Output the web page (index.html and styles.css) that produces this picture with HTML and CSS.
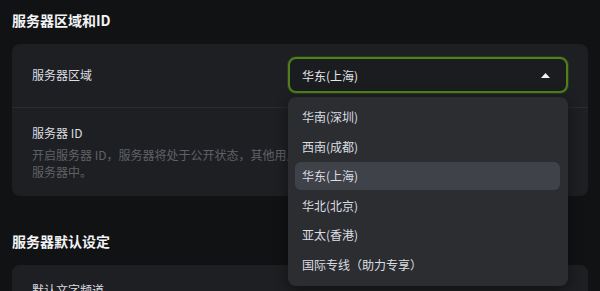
FILE: index.html
```html
<!DOCTYPE html>
<html lang="zh-CN">

<head>
    <meta charset="UTF-8">
    <meta name="viewport" content="width=device-width, initial-scale=1.0">
    <title>服务器设置</title>
    <link rel="stylesheet" href="styles.css">
</head>

<body>
    <div class="page">
        <h2 class="section-title">服务器区域和ID</h2>
        <div class="card">
            <div class="row">
                <span class="label">服务器区域</span>
                <div class="select-wrap">
                    <div class="select">
                        <span>华东(上海)</span>
                        <svg class="caret" width="9" height="5" viewBox="0 0 9 5"><path d="M0 5 L4.5 0 L9 5 Z" fill="#f2f3f5"/></svg>
                    </div>
                    <ul class="menu">
                        <li class="menu-item">华南(深圳)</li>
                        <li class="menu-item">西南(成都)</li>
                        <li class="menu-item active">华东(上海)</li>
                        <li class="menu-item">华北(北京)</li>
                        <li class="menu-item">亚太(香港)</li>
                        <li class="menu-item">国际专线（助力专享）</li>
                    </ul>
                </div>
            </div>
            <div class="row col">
                <span class="label">服务器 ID</span>
                <p class="desc">开启服务器 ID，服务器将处于公开状态，其他用户可以通过搜索服务器 ID 快速加入到你的<br>服务器中。</p>
            </div>
        </div>

        <h2 class="section-title second">服务器默认设定</h2>
        <div class="card">
            <div class="row col">
                <span class="label">默认文字频道</span>
            </div>
        </div>
    </div>
</body>

</html>
```

FILE: styles.css
```css
body {
    margin: 0;
    background-color: #111214;
    font-family: "Noto Sans CJK SC", "Noto Sans", sans-serif;
    color: #dbdee1;
    overflow: hidden;
}

.page {
    padding: 10px 12px 0;
}

.section-title {
    margin: 0;
    font-size: 14px;
    line-height: 20px;
    font-weight: 700;
    color: #f2f3f5;
}

.section-title.second {
    margin-top: 35px;
}

.card {
    margin-top: 14px;
    background-color: #1e1f22;
    border-radius: 8px;
}

.row {
    display: flex;
    align-items: center;
    justify-content: space-between;
    padding: 13px 20px 14px;
}

.row + .row {
    border-top: 1px solid #2a2b2f;
}

.row.col {
    flex-direction: column;
    align-items: flex-start;
    padding: 16px 20px 16px;
}

.label {
    font-size: 12px;
    line-height: 18px;
    color: #dbdee1;
}

.desc {
    margin: 4px 0 0;
    width: 536px;
    font-size: 12px;
    line-height: 17px;
    color: #5f6168;
}

.select-wrap {
    position: relative;
    width: 280px;
}

.select {
    display: flex;
    align-items: center;
    justify-content: space-between;
    height: 32px;
    padding: 0 16px 0 12px;
    border: 2px solid #4f801c;
    border-radius: 8px;
    background-color: #1b1c1f;
    box-shadow: 0 0 0 1px rgba(79, 128, 28, 0.25);
    font-size: 12px;
    color: #e3e5e8;
}

.caret {
    display: block;
}

.menu {
    position: absolute;
    top: 40px;
    left: 0;
    right: 0;
    margin: 0;
    padding: 6px 8px 7px 7px;
    list-style: none;
    background-color: #2b2d31;
    border-radius: 8px;
    box-shadow: 0 4px 14px rgba(0, 0, 0, 0.45);
    display: flex;
    flex-direction: column;
    gap: 1.5px;
    z-index: 2;
}

.menu-item {
    height: 28px;
    line-height: 28px;
    padding: 0 7px;
    border-radius: 6px;
    font-size: 12px;
    color: #dbdee1;
}

.menu-item.active {
    background-color: #404249;
}
```
